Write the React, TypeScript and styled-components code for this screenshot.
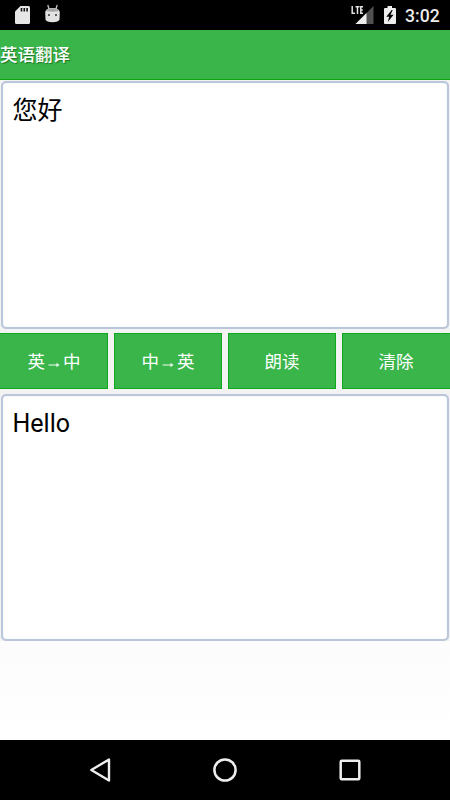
import React from "react";
import styled, { createGlobalStyle } from "styled-components";

const GlobalStyle = createGlobalStyle`
  html, body { margin: 0; padding: 0; background: #fff; }
  *, *::before, *::after { box-sizing: border-box; }
`;

const Screen = styled.div`
  width: 450px;
  height: 800px;
  display: flex;
  flex-direction: column;
  overflow: hidden;
  background: #fff;
  font-family: Roboto, "Noto Sans CJK SC", sans-serif;
`;

const StatusBar = styled.header`
  height: 30px;
  flex: none;
  display: flex;
  justify-content: space-between;
  background: #000;
  color: #ececec;
`;

const StatusGroup = styled.div`
  display: flex;
  align-items: center;
`;

const Clock = styled.time`
  width: 45px;
  font-size: 17.6px;
  font-weight: 500;
  line-height: 30px;
  padding-top: 1px;
`;

const TitleBar = styled.h1`
  height: 50px;
  flex: none;
  margin: 0;
  background: #39b54a;
  border-bottom: 1px solid #0da60d;
  color: #fff;
  font-size: 17.5px;
  font-weight: 500;
  line-height: 50px;
  text-shadow: 1px 1px 1px rgba(0, 60, 0, 0.5);
`;

const Content = styled.main`
  flex: none;
  height: 561px;
  display: flex;
  flex-direction: column;
  padding-top: 1px;
  background: #f3f3f3;
`;

const TextBox = styled.textarea<{ $height: number }>`
  display: block;
  flex: none;
  width: 448px;
  height: ${({ $height }) => $height}px;
  margin: 0 1px;
  padding: 9px 9.5px 8px;
  resize: none;
  outline: none;
  border: 2px solid #bac6da;
  border-radius: 5px;
  box-shadow: inset 0 0 1px #bac6da;
  background: #fff;
  color: #000;
  font: 400 25px/38px Roboto, "Noto Sans CJK SC", sans-serif;
`;

const Actions = styled.div`
  flex: none;
  display: grid;
  grid-template-columns: repeat(4, 108px);
  grid-template-rows: 56px;
  gap: 6px;
  margin: 4px 0 5px;
`;

const ActionButton = styled.button`
  padding: 2px 0 0;
  border: 1px solid #0da91a;
  background: #39b54a;
  color: #fff;
  font: 400 17.5px/26px Roboto, "Noto Sans CJK SC", sans-serif;
  display: flex;
  align-items: center;
  justify-content: center;

  &:first-child { border-left: 0; padding-left: 1px; }
  &:last-child { border-right: 0; padding-right: 1px; }
`;

const Arrow = styled.svg`
  margin: 6px 0 0;
`;

const Blank = styled.div`
  flex: 1;
  background: linear-gradient(#fcfcfc, #fff);
`;

const NavBar = styled.nav`
  height: 60px;
  flex: none;
  display: grid;
  grid-template-columns: repeat(3, 125px);
  justify-content: center;
  background: #000;
`;

const NavButton = styled.button`
  padding: 0;
  border: 0;
  background: none;
  display: flex;
  align-items: center;
  justify-content: center;
`;

const Notifications = () => (
  <svg width="80" height="30" viewBox="0 0 80 30">
    <path d="M20.500 6H28.500Q30 6 30 7.500V22.500Q30 24 28.500 24H16.500Q15 24 15 22.500V11.500Z" fill="#e6e6e6" />
    <path d="M20.700 8h1.600v3.500h-1.600zM23.500 8h1.600v3.500h-1.600zM26.300 8h1.600v3.500h-1.600z" fill="#111" />
    <path d="M47.800 5L49.300 10M57.200 5L55.700 10" stroke="#c4c4c4" strokeWidth="1.300" />
    <path d="M45.200 12Q46 8 52.500 8T59.800 12L59.500 19.500Q58.500 22.200 52.500 22.200T45.500 19.500Z" fill="#e2e2e2" />
    <path d="M46 11Q47 8.200 52.500 8.200T59 11Q52.500 12.500 46 11Z" fill="#a5a5a5" />
    <circle cx="49" cy="15" r="1" fill="#333" />
    <circle cx="56" cy="15" r="1" fill="#333" />
  </svg>
);

const SignalAndBattery = () => (
  <svg width="56" height="30" viewBox="350 0 56 30">
    <path d="M374.500 6V24H356.500Z" fill="#505050" />
    <path d="M367.500 13V24H356.500Z" fill="#eee" />
    <path d="M353.200 6V13.300H356M356.500 6.800H360.500M358.500 6.800V14M364 6.800H361.800V13.300H364M361.800 10H363.800" fill="none" stroke="#e4e4e4" strokeWidth="1.500" />
    <path d="M388.500 6H393V8H395.800Q397 8 397 9V23Q397 24 396 24H386Q385 24 385 23V9Q385 8 386 8H388.500Z" fill="#eee" />
    <path d="M392.700 10L387.300 16.800H390.200L388.800 22L394.600 14.800H391.500L393.700 10Z" fill="#000" />
  </svg>
);

const RightArrow = () => (
  <Arrow width="18" height="8" viewBox="0 0 18 8">
    <path d="M3.500 4H13" stroke="#d7f0da" strokeWidth="1.200" />
    <path d="M11.500 1.800L14.500 4L11.500 6.200Z" fill="#e8f7ea" />
  </Arrow>
);

export default function App() {
  return (
    <Screen>
      <GlobalStyle />
      <StatusBar>
        <StatusGroup><Notifications /></StatusGroup>
        <StatusGroup><SignalAndBattery /><Clock>3:02</Clock></StatusGroup>
      </StatusBar>
      <TitleBar>英语翻译</TitleBar>
      <Content>
        <TextBox $height={248} defaultValue="您好" spellCheck={false} />
        <Actions>
          <ActionButton>英<RightArrow />中</ActionButton>
          <ActionButton>中<RightArrow />英</ActionButton>
          <ActionButton>朗读</ActionButton>
          <ActionButton>清除</ActionButton>
        </Actions>
        <TextBox $height={247} defaultValue="Hello" spellCheck={false} />
      </Content>
      <Blank />
      <NavBar>
        <NavButton aria-label="Back">
          <svg width="36" height="36" viewBox="0 0 36 36"><path d="M27 7.500V28.500L9.300 18Z" fill="none" stroke="#eee" strokeWidth="2.400" strokeLinejoin="round" /></svg>
        </NavButton>
        <NavButton aria-label="Home">
          <svg width="36" height="36" viewBox="0 0 36 36"><circle cx="18" cy="18" r="10.600" fill="none" stroke="#eee" strokeWidth="2.500" /></svg>
        </NavButton>
        <NavButton aria-label="Recents">
          <svg width="36" height="36" viewBox="0 0 36 36"><rect x="8.700" y="8.700" width="18.600" height="18.600" rx="1" fill="none" stroke="#eee" strokeWidth="2.500" /></svg>
        </NavButton>
      </NavBar>
    </Screen>
  );
}
